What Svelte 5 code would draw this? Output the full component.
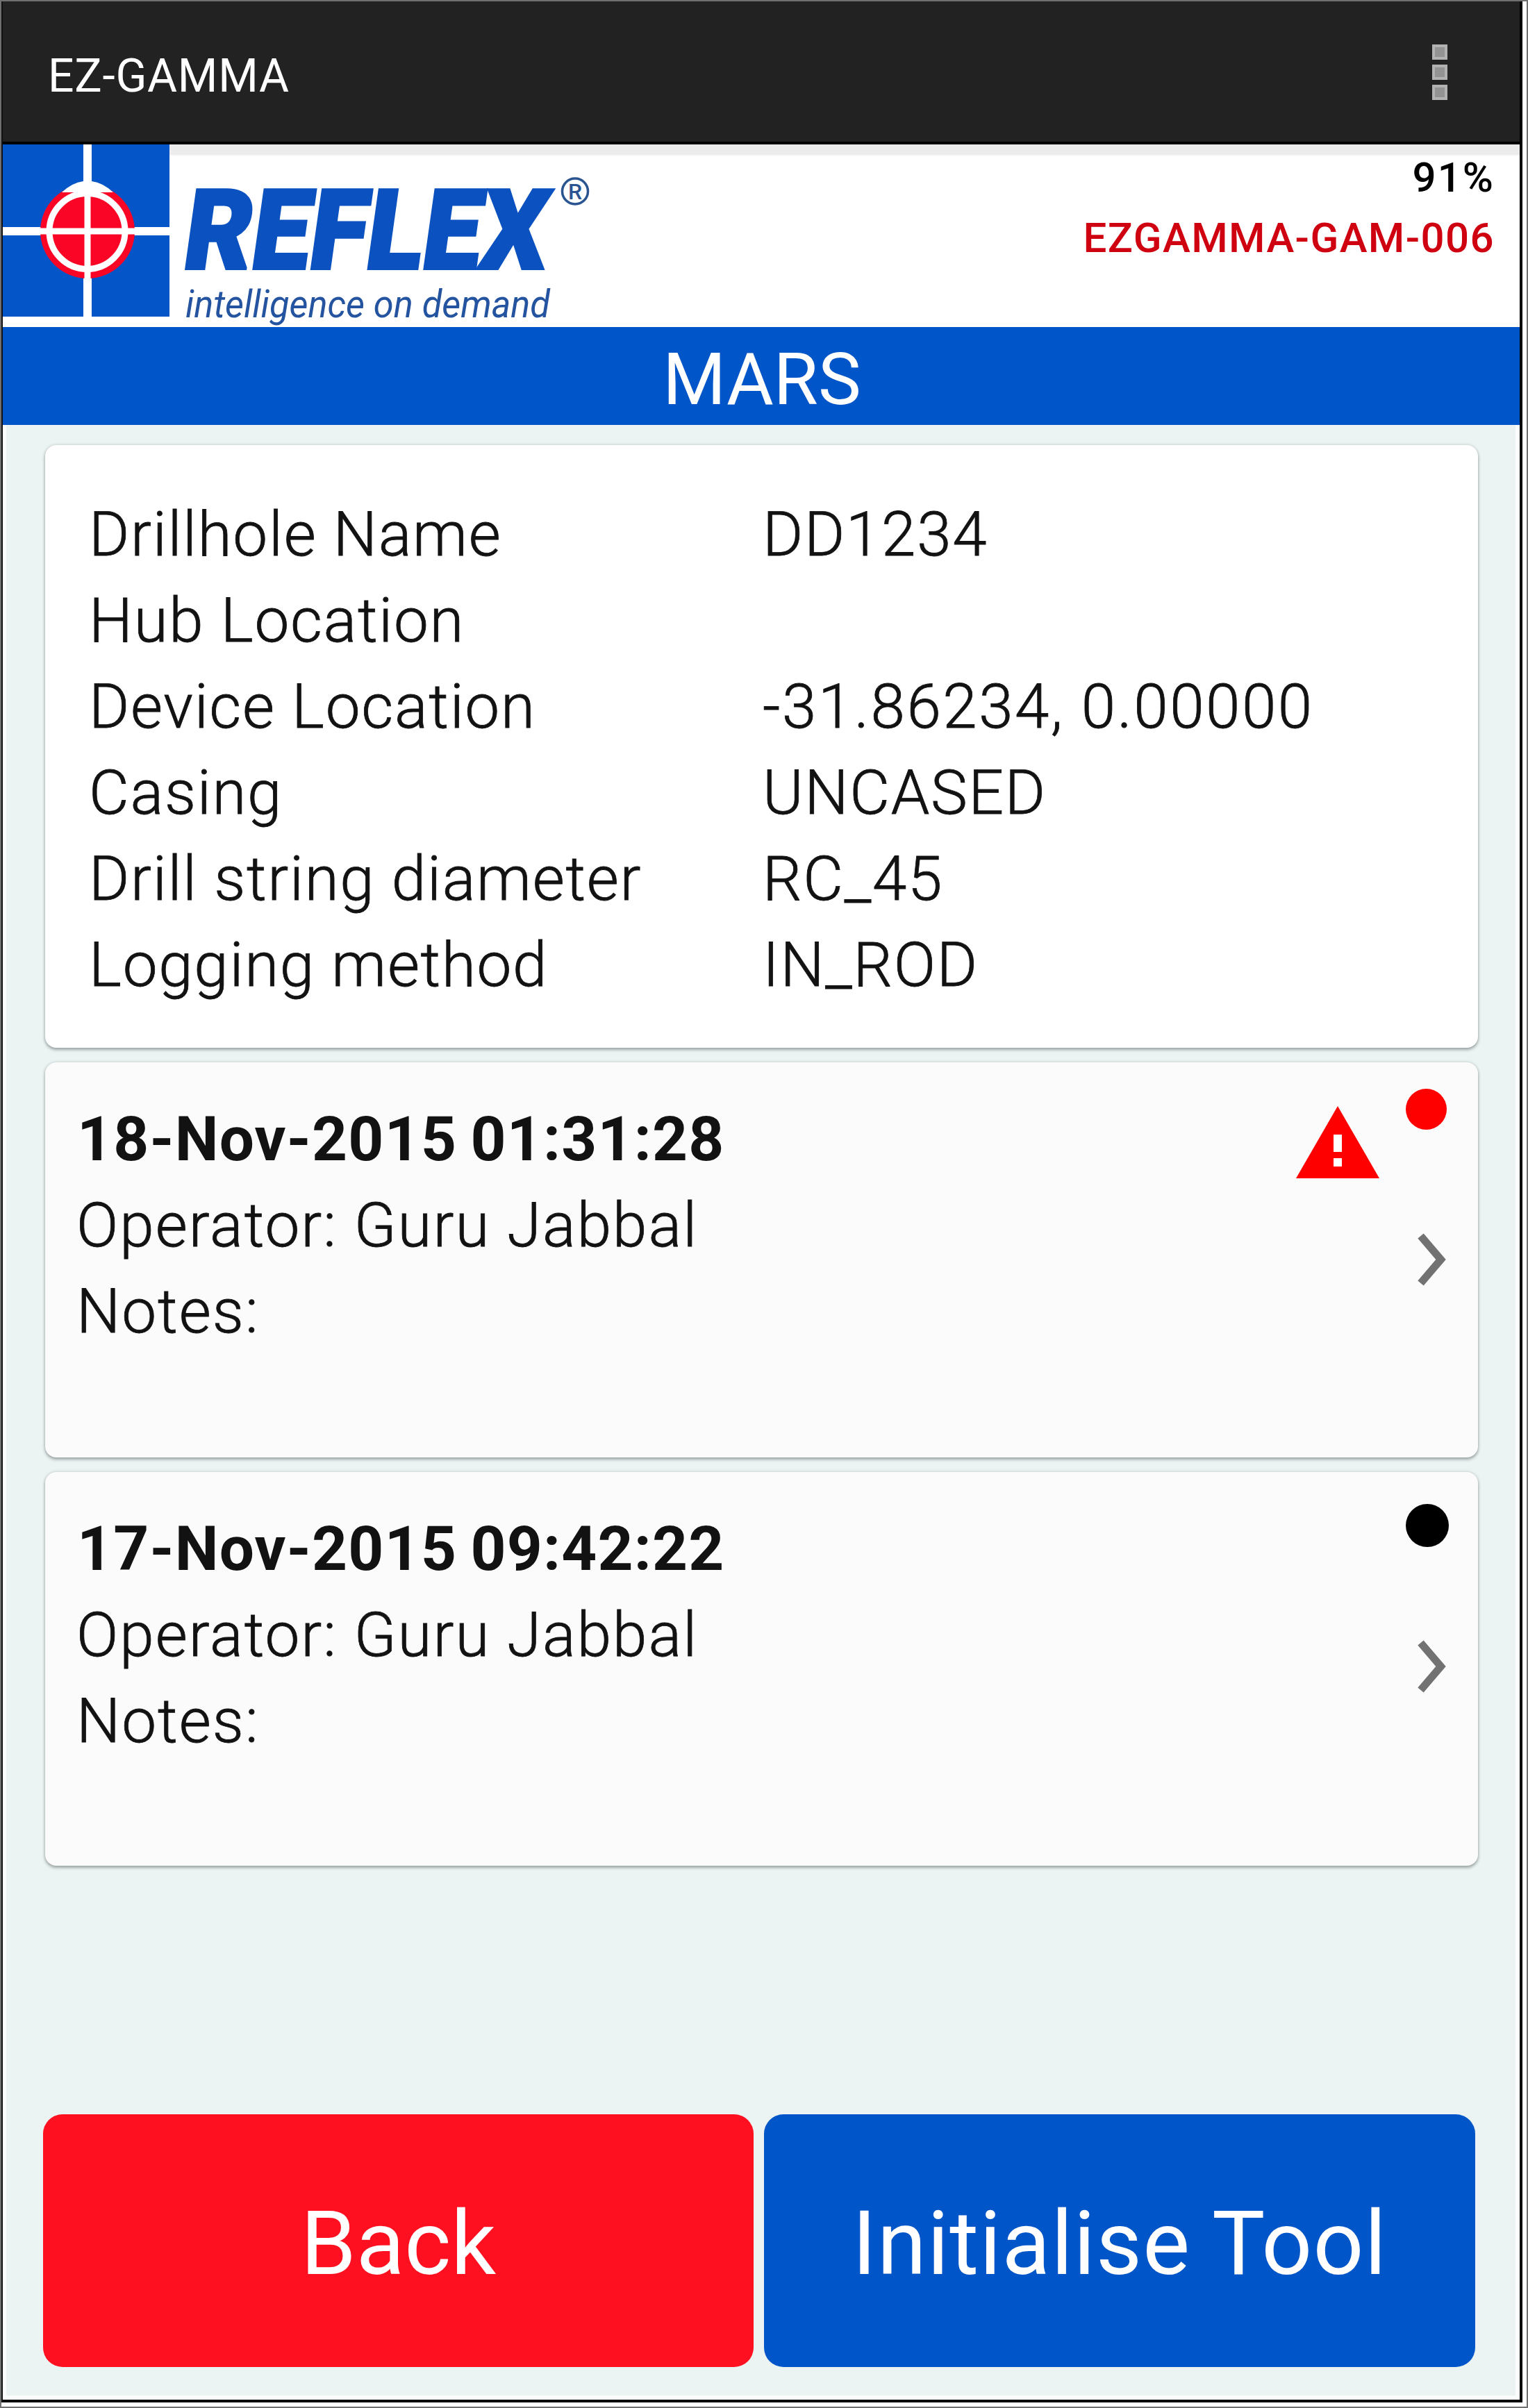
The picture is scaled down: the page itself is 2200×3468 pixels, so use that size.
<script>
  const details = [
    { label: 'Drillhole Name', value: 'DD1234' },
    { label: 'Hub Location', value: '' },
    { label: 'Device Location', value: '-31.86234, 0.00000', numeric: true },
    { label: 'Casing', value: 'UNCASED' },
    { label: 'Drill string diameter', value: 'RC_45' },
    { label: 'Logging method', value: 'IN_ROD' },
  ];
  const runs = [
    { date: '18-Nov-2015 01:31:28', operator: 'Guru Jabbal', status: 'fault' },
    { date: '17-Nov-2015 09:42:22', operator: 'Guru Jabbal', status: 'idle' },
  ];
</script>

<div class="frame">
  <div class="screen">
    <header class="appbar">
      <span class="app-name">EZ-GAMMA</span>
      <span class="menu"><i></i><i></i><i></i></span>
    </header>

    <section class="brand">
      <svg class="logo" viewBox="4 208 860 263" width="860" height="263">
        <rect x="4" y="208" width="240" height="248" fill="#0355c8" />
        <path d="M4 456H244V471H4Z" fill="#fff" />
        <path d="M126 208V456M4 333H244" stroke="#fff" stroke-width="12" />
        <circle cx="126" cy="333" r="68" fill="#fb0526" />
        <path d="M126 262V404M55 333H197" stroke="#fff" stroke-width="9" />
        <circle cx="125.500" cy="333" r="54.500" fill="none" stroke="#fff" stroke-width="9" />
        <path d="M89 277Q104 263 120 261H132Q148 263 163 277L141 277Q146 284 152 288Q126 274 100 288Q106 284 111 277Z" fill="#fff" />
        <text class="wordmark" transform="translate(260 387) skewX(-8)" x="0" y="0" textLength="522" lengthAdjust="spacingAndGlyphs">REFLEX</text>
        <circle cx="828" cy="275.500" r="18.500" fill="none" stroke="#2b5590" stroke-width="3.500" />
        <text class="reg" x="828" y="287" text-anchor="middle">R</text>
        <text class="tagline" x="267" y="456.500" textLength="525" lengthAdjust="spacingAndGlyphs">intelligence on demand</text>
      </svg>
      <div class="device">
        <span class="battery">91%</span>
        <span class="serial">EZGAMMA-GAM-006</span>
      </div>
    </section>

    <h1 class="site">MARS</h1>

    <main>
      <dl class="card details">
        {#each details as { label, value, numeric }}
          <dt>{label}</dt>
          <dd class:numeric>{value}</dd>
        {/each}
      </dl>

      {#each runs as run}
        <article class="card run {run.status}">
          <div class="info">
            <strong>{run.date}</strong>
            <span>Operator: {run.operator}</span>
            <span class="notes">Notes:</span>
          </div>
          <div class="state">
            <div class="flags">
              {#if run.status === 'fault'}
                <svg class="warn" viewBox="0 0 120 104" width="120" height="104">
                  <path d="M60 0L120 104H0Z" fill="#f00" />
                  <path d="M54 41H66V66H54ZM54 75H66V87H54Z" fill="#fff" />
                </svg>
              {/if}
              <span class="dot"></span>
            </div>
            <svg class="chevron" viewBox="0 0 42 78" width="42" height="78">
              <path d="M4.500 5L33.500 39L4.500 73" fill="none" stroke="#727272" stroke-width="11" />
            </svg>
          </div>
        </article>
      {/each}
    </main>

    <nav>
      <button class="back">Back</button>
      <button class="init">Initialise Tool</button>
    </nav>
  </div>
</div>

<style>
  .frame {
    box-sizing: border-box;
    width: 2200px;
    height: 3468px;
    border: 2px solid #707070;
    background: #fff;
    font-family: Roboto, 'Liberation Sans', sans-serif;
    color: #121212;
  }
  .screen {
    box-sizing: border-box;
    width: 2190px;
    height: 3458px;
    display: flex;
    flex-direction: column;
    border-left: 2px solid #111;
    border-right: 4px solid #000;
    border-bottom: 4px solid #000;
    background: #ebf3f3;
    box-shadow: inset -6px -6px 0 #fbfdfd, inset 5px 0 0 #fbfdfd;
  }
  .appbar {
    box-sizing: border-box;
    height: 206px;
    display: flex;
    align-items: center;
    justify-content: space-between;
    padding: 3px 104px 0 65px;
    background: #222;
    border-bottom: 4px solid #000;
  }
  .app-name {
    padding-top: 9px;
    font-size: 66px;
    color: #fff;
    letter-spacing: 0.7px;
  }
  .menu {
    display: flex;
    flex-direction: column;
    gap: 7px;
    margin-bottom: 1px;
  }
  .menu i {
    width: 22px;
    height: 22px;
    box-sizing: border-box;
    background: #939393;
    border: 4px solid #b2b2b2;
  }
  .brand {
    height: 263px;
    display: flex;
    justify-content: space-between;
    background: linear-gradient(#ececec 0 14px, #fff 17px);
  }
  .logo {
    display: block;
    overflow: visible;
    position: relative;
  }
  .wordmark {
    font: 900 160px Roboto, sans-serif;
    fill: #0b52c0;
    stroke: #0b52c0;
    stroke-width: 4px;
  }
  .reg {
    font: 500 32px Roboto, sans-serif;
    fill: #2b5590;
  }
  .tagline {
    font: italic 400 55px Roboto, sans-serif;
    fill: #2454a0;
  }
  .device {
    display: flex;
    flex-direction: column;
    align-items: flex-end;
    padding: 4px 36px 0 0;
    font-size: 60px;
    font-weight: 500;
    line-height: 87px;
    letter-spacing: 1.4px;
  }
  .battery {
    color: #000;
    letter-spacing: 2px;
  }
  .serial {
    color: #cf0010;
  }
  .site {
    margin: 0;
    height: 141px;
    line-height: 151px;
    background: #0055c8;
    color: #fff;
    font-size: 104px;
    font-weight: 400;
    text-align: center;
    padding-left: 2px;
  }
  main {
    display: flex;
    flex-direction: column;
    padding: 29px 60px 0 61px;
  }
  .card {
    box-sizing: border-box;
    margin: 0;
    border-radius: 16px;
    background: #fbfbfb;
    box-shadow: 0 3px 4px rgba(60, 70, 70, 0.4), 0 0 4px rgba(60, 70, 70, 0.22);
    font-size: 89px;
    font-weight: 300;
    line-height: 124px;
    letter-spacing: 1.7px;
  }
  .details {
    height: 868px;
    margin-bottom: 21px;
    padding: 67px 0 0 63px;
    display: grid;
    grid-template-columns: 970px 1fr;
    grid-auto-rows: 124px;
    background: #fff;
  }
  dt,
  dd {
    margin: 0;
    white-space: nowrap;
    -webkit-text-stroke: 0.8px currentColor;
  }
  .numeric {
    letter-spacing: 2.5px;
  }
  .run {
    height: 569px;
    margin-bottom: 21px;
    padding: 49px 0 0 45px;
    display: flex;
    justify-content: space-between;
  }
  .run.idle {
    height: 567px;
  }
  .info {
    display: flex;
    flex-direction: column;
    letter-spacing: 2px;
  }
  .info span {
    -webkit-text-stroke: 0.8px currentColor;
  }
  .info strong {
    padding-left: 1px;
    font-weight: 700;
    letter-spacing: 1.2px;
    word-spacing: -4px;
  }
  .state {
    display: flex;
    flex-direction: column;
    align-items: flex-end;
    padding-right: 45px;
  }
  .flags {
    display: flex;
    gap: 38px;
    height: 185px;
    margin-top: -11px;
  }
  .warn {
    margin-top: 25px;
  }
  .dot {
    width: 59px;
    height: 59px;
    border-radius: 50%;
    background: #f00;
  }
  .chevron {
    margin-top: 22px;
  }
  .idle .dot {
    width: 62px;
    height: 62px;
    margin: 8px -3px 0 0;
    background: #000;
  }
  .idle .chevron {
    margin-top: 18px;
  }
  nav {
    margin-top: auto;
    display: grid;
    grid-template-columns: 1023px 1024px;
    gap: 15px;
    padding: 0 0 47px 58px;
  }
  button {
    height: 364px;
    padding: 8px 0 0;
    border: 0;
    border-radius: 28px;
    color: #fff;
    font: 400 128px Roboto, sans-serif;
  }
  .back {
    background: #ff1020;
  }
  .init {
    background: #0055c8;
    letter-spacing: 1.2px;
  }
</style>
